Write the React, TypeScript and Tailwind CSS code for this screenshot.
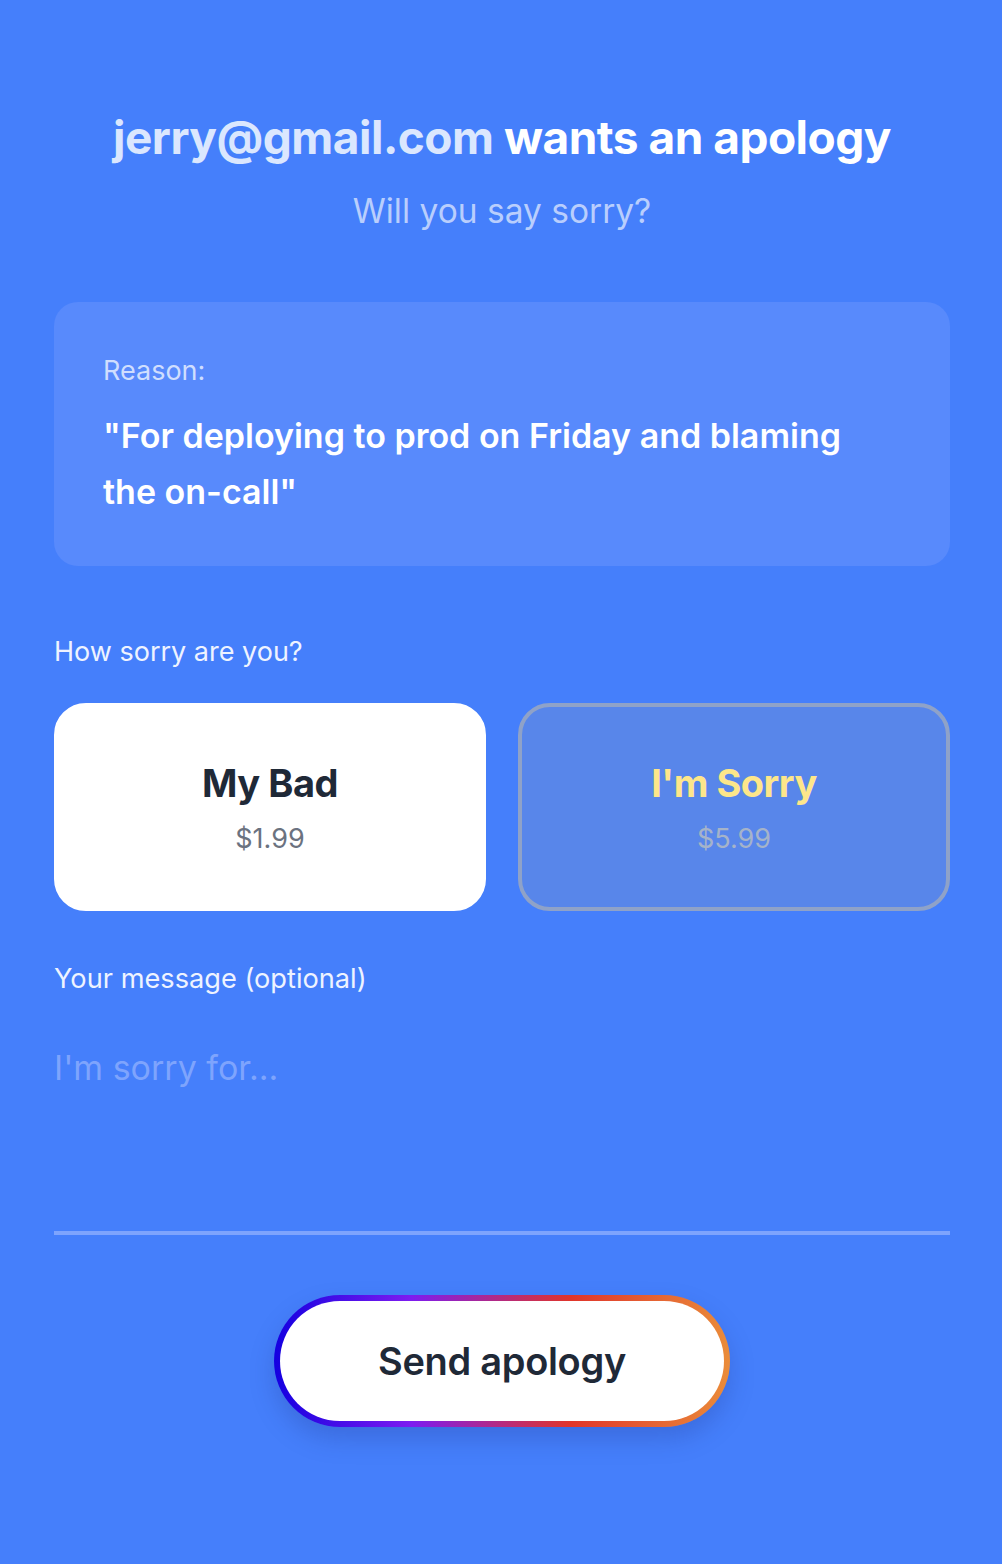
import { useState } from 'react';

const tiers = [
  { id: 'bad', title: 'My Bad', price: '$1.99' },
  { id: 'sorry', title: "I'm Sorry", price: '$5.99' },
];

export default function App() {
  const [selected, setSelected] = useState('bad');
  const [message, setMessage] = useState('');

  return (
    <div className="min-h-screen bg-[#457ffb] font-['Inter',sans-serif] pl-[54px] pr-[52px] pt-[105px] pb-[138px]">
      {/* Header */}
      <div className="text-center">
        <h1 className="text-[46px] leading-[64px] font-bold text-white tracking-[-0.5px]">
          <span className="text-[#dbe7fe]">jerry@gmail.com</span> wants an apology
        </h1>
        <p className="mt-[18px] text-[33.5px] leading-[48px] text-[#b9cefd]">
          Will you say sorry?
        </p>
      </div>

      {/* Reason */}
      <div className="mt-[67px] rounded-[24px] bg-[#588afc] px-[49px] pt-[49px] pb-[46px]">
        <p className="text-[27px] leading-[40px] text-[#cfdefe]">Reason:</p>
        <p className="mt-[17px] text-[34px] leading-[56px] font-semibold text-white">
          "For deploying to prod on Friday and blaming the on-call"
        </p>
      </div>

      {/* Tier picker */}
      <p className="mt-[66px] text-[27px] leading-[40px] text-[#eef3ff]">How sorry are you?</p>
      <div className="mt-[31px] grid grid-cols-2 gap-[32px]">
        {tiers.map((t) => {
          const active = selected === t.id;
          return (
            <button
              key={t.id}
              onClick={() => setSelected(t.id)}
              className={
                active
                  ? 'h-[208px] rounded-[32px] bg-white flex flex-col items-center justify-center border-4 border-white'
                  : 'h-[208px] rounded-[32px] bg-[#5886ea] flex flex-col items-center justify-center border-4 border-[#8fa2c8]'
              }
            >
              <span
                className={
                  active
                    ? 'text-[38px] leading-[56px] font-bold text-[#1f2937] tracking-[-0.5px]'
                    : 'text-[38px] leading-[56px] font-bold text-[#fde68a] tracking-[-0.5px]'
                }
              >
                {t.title}
              </span>
              <span
                className={
                  active
                    ? 'mt-[8px] text-[27px] leading-[40px] text-[#6b7280]'
                    : 'mt-[8px] text-[27px] leading-[40px] text-[#a5b3c9]'
                }
              >
                {t.price}
              </span>
            </button>
          );
        })}
      </div>

      {/* Message */}
      <p className="mt-[48px] text-[27.2px] leading-[40px] text-[#eef3ff]">Your message (optional)</p>
      <textarea
        value={message}
        onChange={(e) => setMessage(e.target.value)}
        placeholder="I'm sorry for..."
        className="mt-[17px] block w-full h-[219px] resize-none bg-transparent border-0 border-b-4 border-[#7ea4fd] py-[24px] text-[34px] leading-[56px] text-white placeholder:text-[#7ea4fd] outline-none"
      />

      {/* Send */}
      <div className="mt-[60px] flex justify-center">
        <button className="w-[456px] h-[132px] rounded-full p-[6px] bg-[linear-gradient(to_right,#1400e0,#7d1cf0_30%,#e0352a_65%,#ea8c3a)] shadow-[0_12px_24px_rgba(30,50,140,0.25)]">
          <span className="flex h-full w-full items-center justify-center rounded-full bg-white text-[38px] font-semibold text-[#1f2937] tracking-[-0.3px]">
            Send apology
          </span>
        </button>
      </div>
    </div>
  );
}
